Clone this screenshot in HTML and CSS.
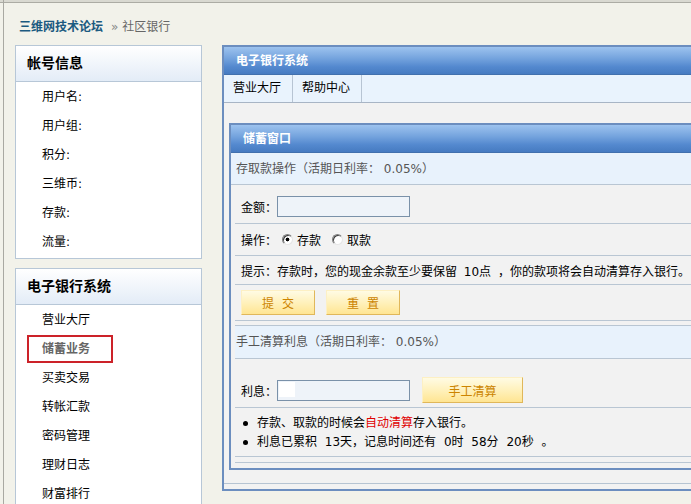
FILE: index.html
```html
<!DOCTYPE html>
<html lang="zh-CN">
<head>
<meta charset="utf-8">
<title>社区银行</title>
<link rel="stylesheet" href="styles.css">
</head>
<body>
<div class="frame">
  <div class="crumb"><a class="crumb-home" href="#">三维网技术论坛</a><span class="crumb-sep">»</span><span class="crumb-cur">社区银行</span></div>
  <div class="layout">
    <aside class="side">
      <section class="sbox">
        <h2 class="sbox-title">帐号信息</h2>
        <ul class="sbox-list">
          <li>用户名:</li>
          <li>用户组:</li>
          <li>积分:</li>
          <li>三维币:</li>
          <li>存款:</li>
          <li>流量:</li>
        </ul>
      </section>
      <section class="sbox">
        <h2 class="sbox-title">电子银行系统</h2>
        <ul class="sbox-list">
          <li>营业大厅</li>
          <li class="active"><span>储蓄业务</span></li>
          <li>买卖交易</li>
          <li>转帐汇款</li>
          <li>密码管理</li>
          <li>理财日志</li>
          <li>财富排行</li>
        </ul>
      </section>
    </aside>
    <main class="panel">
      <div class="bar">电子银行系统</div>
      <nav class="tabs"><span class="tab">营业大厅</span><span class="tab">帮助中心</span></nav>
      <div class="panel-body">
        <div class="window">
          <div class="bar">储蓄窗口</div>
          <div class="band">存取款操作（活期日利率： 0.05%）</div>
          <div class="row r-amount"><span class="lbl">金额：</span><span class="field"></span></div>
          <div class="row r-radio"><span class="lbl">操作：</span><span class="radio checked"></span><span class="opt">存款</span><span class="radio"></span><span>取款</span></div>
          <div class="row r-hint">提示：存款时，您的现金余款至少要保留 10点 ，你的款项将会自动清算存入银行。</div>
          <div class="row r-btns"><button class="btn">提 交</button><button class="btn">重 置</button></div>
          <div class="band band-sep">手工清算利息（活期日利率： 0.05%）</div>
          <div class="row r-interest"><span class="lbl">利息：</span><span class="field field-mark"></span><button class="btn btn-wide">手工清算</button></div>
          <div class="row r-notes">
            <ul class="notes">
              <li>存款、取款的时候会<span class="red">自动清算</span>存入银行。</li>
              <li>利息已累积 13天，记息时间还有 0时 58分 20秒 。</li>
            </ul>
          </div>
          <div class="row r-empty"></div>
        </div>
      </div>
      <div class="panel-foot"></div>
    </main>
  </div>
</div>
</body>
</html>
```

FILE: styles.css
```css
html, body {
  margin: 0;
  height: 100%;
  overflow: hidden;
}
body {
  background: #f2f2ea;
  font: 12px "DejaVu Sans", "Noto Sans CJK SC", sans-serif;
  color: #000;
  text-spacing-trim: space-all;
  font-feature-settings: "chws" 0, "halt" 0;
  box-shadow: inset 0 2px 0 #d9d9d1, inset 0 3px 0 #acaca4;
}
.frame {
  height: 100%;
  box-sizing: border-box;
  margin-left: 3px;
  border-left: 1px solid #a9a9a2;
  padding-top: 3px;
}
.crumb {
  height: 42px;
  box-sizing: border-box;
  padding: 16px 0 0 15px;
  line-height: 16px;
}
.crumb-home {
  color: #1b5a80;
  font-weight: bold;
  text-decoration: none;
}
.crumb-sep {
  color: #888;
  margin: 0 4px 0 8px;
}
.crumb-cur {
  color: #666;
}
.layout {
  display: flex;
  align-items: flex-start;
  gap: 20px;
  padding-left: 11px;
}
.side {
  width: 187px;
  flex-shrink: 0;
}
.sbox {
  background: #fff;
  border: 1px solid #b7c7d7;
}
.sbox + .sbox {
  margin-top: 9px;
}
.sbox-title {
  margin: 0;
  height: 35px;
  line-height: 35px;
  padding-left: 11px;
  font-size: 14px;
  font-weight: bold;
  border-bottom: 1px solid #b7c7d7;
  background: linear-gradient(#ffffff, #e3ecf7);
}
.sbox-list {
  list-style: none;
  margin: 0;
  padding: 1px 0 1px 26px;
}
.sbox-list li {
  height: 29px;
  line-height: 29px;
}
.sbox-list .active span {
  display: inline-block;
  box-sizing: border-box;
  width: 86px;
  height: 28px;
  margin: 0 0 0 -15px;
  padding-left: 13px;
  line-height: 24px;
  border: 2px solid #cc2229;
  font-weight: bold;
  color: #666;
  vertical-align: top;
}
.panel {
  width: 480px;
  flex-shrink: 0;
  border: 2px solid #6c8ebf;
  background: #f2f2f2;
}
.bar {
  height: 28px;
  line-height: 28px;
  padding-left: 12px;
  color: #fff;
  font-weight: bold;
  background: linear-gradient(#9dc3ef, #75a4de 40%, #5489cf 70%, #4479bf);
  box-shadow: inset 0 -1px 0 #4170ad;
}
.tabs {
  display: flex;
  height: 27px;
  background: #e9f3fd;
  border-bottom: 1px solid #a8b5c5;
}
.tab {
  line-height: 27px;
  padding: 0 11px 0 9px;
  border-right: 1px solid #b7c4d3;
}
.panel-body {
  padding: 20px 0 13px 5px;
}
.panel-foot {
  height: 5px;
  border-top: 1px solid #b6c4d2;
}
.window {
  border: 2px solid #6c8ebf;
  padding-bottom: 5px;
}
.band {
  height: 32px;
  box-sizing: border-box;
  line-height: 32px;
  padding-left: 5px;
  background: #e8f2fc;
  color: #555;
  border-bottom: 1px solid #b9c6d3;
}
.band-sep {
  height: 34px;
  margin-top: 4px;
  margin-left: 4px;
  padding-left: 1px;
  border-top: 1px solid #b9c6d3;
}
.row {
  display: flex;
  align-items: center;
  box-sizing: border-box;
  margin-left: 4px;
  padding-left: 6px;
  border-bottom: 1px solid #b9c6d3;
}
.r-amount { height: 39px; padding-top: 5px; }
.r-radio { height: 32px; }
.r-hint { height: 29px; word-spacing: 3px; }
.r-btns { height: 36px; }
.r-interest { height: 49px; padding-top: 14px; }
.r-notes { height: 49px; padding-top: 6px; align-items: flex-start; }
.r-empty { height: 6px; }
.field {
  display: inline-block;
  width: 133px;
  height: 21px;
  box-sizing: border-box;
  border: 1px solid #7a91a9;
  background: #eef3f9;
}
.field-mark {
  background: linear-gradient(#fff, #fff) 1px 1px / 16px 15px no-repeat, #eef3f9;
}
.radio {
  display: inline-block;
  width: 11px;
  height: 11px;
  box-sizing: border-box;
  border-radius: 50%;
  border: 1px solid;
  border-color: #808080 #e6e6e6 #e6e6e6 #808080;
  box-shadow: inset 1px 1px 0 #404040;
  background: #fff;
  margin: 0 4px 0 5px;
}
.radio.checked {
  background: radial-gradient(circle, #000 0 1.6px, #fff 2.2px);
}
.opt {
  margin-right: 6px;
}
.btn {
  width: 74px;
  height: 25px;
  box-sizing: border-box;
  padding: 0;
  border: 1px solid;
  border-color: #fdf0c4 #e0b75a #e0b75a #fdf0c4;
  background: linear-gradient(#fffbe4, #fff0b8 55%, #ffe592);
  color: #cc8400;
  font: 12px "DejaVu Sans", "Noto Sans CJK SC", sans-serif;
  word-spacing: 4px;
}
.btn + .btn {
  margin-left: 11px;
}
.btn-wide {
  width: 101px;
  height: 26px;
  margin-left: 12px;
  word-spacing: 0;
}
.notes {
  list-style: none;
  margin: 0;
  padding: 0;
  word-spacing: 4px;
}
.notes li {
  line-height: 19px;
}
.notes li::before {
  content: "";
  display: inline-block;
  width: 5px;
  height: 5px;
  border-radius: 50%;
  background: #000;
  margin: 0 9px 0 2px;
  vertical-align: middle;
}
.red {
  color: #e00000;
}
```
